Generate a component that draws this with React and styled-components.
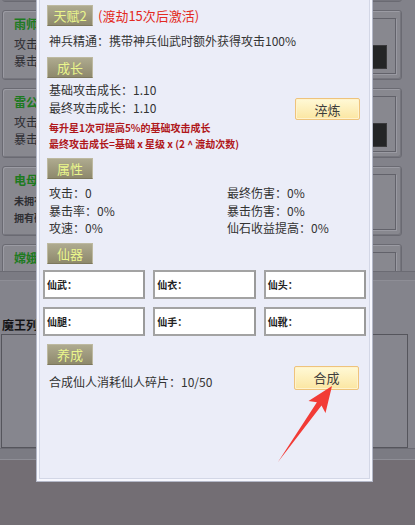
import React from "react";
import styled, { createGlobalStyle } from "styled-components";

const Global = createGlobalStyle`
  html, body { margin: 0; padding: 0; }
  body { width: 415px; height: 525px; overflow: hidden; background: #736e74; }
  * { box-sizing: border-box; }
`;

const FONT = `"Noto Sans CJK SC", "Noto Sans", sans-serif`;

const Scene = styled.div`
  position: relative;
  width: 415px;
  height: 525px;
  overflow: hidden;
  font-family: ${FONT};
  background: #736e74;
`;

const Backdrop = styled.div`
  display: flex;
  flex-direction: column;
  height: 100%;
`;

const ListArea = styled.div`
  height: 271px;
  flex: none;
  display: flex;
  align-items: flex-start;
  overflow: hidden;
  background: #82828a;
`;

const LeftClip = styled.div`
  width: 37px;
  overflow: hidden;
  flex: none;
`;

const LeftList = styled.div`
  width: 200px;
  margin-top: -68px;
  display: flex;
  flex-direction: column;
  gap: 8px;
`;

const RightList = styled.div`
  width: 102px;
  margin-left: auto;
  margin-right: 13px;
  margin-top: -68px;
  display: flex;
  flex-direction: column;
  gap: 8px;
`;

const Card = styled.div`
  height: 70px;
  flex: none;
  margin-left: ${(p) => (p.$right ? "0" : "2px")};
  border: 1px solid #6a6a72;
  border-radius: 3px;
  background: #88888f;
  box-shadow: inset 1px 1px 0 #9b9ba3, inset -1px -1px 0 #75757d;
  padding: ${(p) => (p.$right ? "7px 5px 5px 9px" : "4px 0 0 11px")};
  display: flex;
  flex-direction: column;
`;

const HeroName = styled.div`
  color: #1d7a1f;
  font-weight: bold;
  font-size: 12px;
  line-height: 18px;
  margin-bottom: 2px;
`;

const HeroLine = styled.div`
  color: #2e2e33;
  font-size: ${(p) => (p.$small ? "10px" : "12px")};
  line-height: ${(p) => (p.$small ? "15px" : "17px")};
  font-weight: ${(p) => (p.$small ? "bold" : "normal")};
  white-space: nowrap;
  margin-top: ${(p) => (p.$small ? "2px" : "0")};
`;

const InnerBox = styled.div`
  flex: 1;
  border: 1px solid #62626a;
  box-shadow: 1px 1px 0 #9a9aa2;
  display: flex;
  justify-content: flex-end;
  align-items: flex-start;
  padding: 26px 8px 0 0;
`;

const DarkSquare = styled.div`
  width: 28px;
  height: 24px;
  background: #242526;
  border: 1px solid #3a3a3c;
  border-left: ${(p) => (p.$teal ? "2px solid #1f8fa0" : "1px solid #3a3a3c")};
`;

const Divider = styled.div`
  height: ${(p) => p.$h}px;
  flex: none;
  background: #7b7b83;
  border-top: 1px solid #6b6b73;
  border-bottom: 1px solid #8e8e96;
`;

const BossArea = styled.div`
  height: 167px;
  flex: none;
  background: #84848c;
  display: flex;
  flex-direction: column;
`;

const BossTitle = styled.div`
  height: 53px;
  width: 37px;
  overflow: hidden;
  white-space: nowrap;
  display: flex;
  align-items: flex-end;
  padding-left: 2px;
  font-size: 12px;
  font-weight: bold;
  color: #141416;
  line-height: 18px;
`;

const BossBox = styled.div`
  flex: 1;
  margin: 0 7px 0 1px;
  border: 1px solid #55555c;
  background: #86868e;
`;

const Dark = styled.div`
  flex: 1;
  background: #736e74;
`;

const Panel = styled.div`
  position: absolute;
  left: 36px;
  top: -12px;
  width: 337px;
  height: 494px;
  background: #ebedf8;
  border: 1px solid #b4b8c8;
  box-shadow: inset 0 0 0 2px #f7f8ff, inset 0 0 0 3px #d3d7e6;
  padding: 16px 12px 0 12px;
  display: flex;
  flex-direction: column;
  color: #333;
  font-size: 12px;
`;

const HeadRow = styled.div`
  display: flex;
  align-items: center;
  gap: 5px;
  margin-top: ${(p) => p.$mt || 0}px;
`;

const Tag = styled.div`
  width: 46px;
  height: 21px;
  margin-left: -2px;
  flex: none;
  display: flex;
  align-items: center;
  justify-content: center;
  background: linear-gradient(#aeaa8f, #8e896c);
  border: 1px solid #bdb9a0;
  border-bottom-color: #7c775d;
  color: #eaf68c;
  font-size: 13px;
  line-height: 1;
`;

const Note = styled.span`
  color: #e32a22;
  font-size: 13px;
`;

const Line = styled.div`
  line-height: 18px;
  white-space: nowrap;
  margin-top: ${(p) => p.$mt || 0}px;
`;

const GrowthRow = styled.div`
  display: flex;
  justify-content: space-between;
  align-items: flex-start;
  margin-top: 3px;
`;

const Lines = styled.div`
  display: flex;
  flex-direction: column;
`;

const GoldButton = styled.button`
  width: 65px;
  height: ${(p) => p.$h}px;
  margin-top: ${(p) => p.$mt || 0}px;
  margin-right: ${(p) => p.$mr || 0}px;
  padding: 0;
  border: 1px solid #eec37c;
  border-radius: 2px;
  background: linear-gradient(#fff9d6, #fbe6a2);
  box-shadow: inset 0 0 0 1px #fff3cc;
  color: #3d3d3d;
  font-family: ${FONT};
  font-size: 13px;
  cursor: pointer;
`;

const RedNote = styled.div`
  color: #b0171b;
  font-size: 10px;
  font-weight: bold;
  line-height: 16px;
  white-space: nowrap;
`;

const StatsGrid = styled.div`
  display: grid;
  grid-template-columns: 178px 1fr;
  grid-auto-rows: 17.5px;
  margin-top: 5px;
  line-height: 17.5px;
`;

const FieldGrid = styled.div`
  display: grid;
  grid-template-columns: repeat(3, 1fr);
  grid-auto-rows: 29px;
  gap: 8px;
  margin: 6px -6px 0 -6px;
`;

const Field = styled.div`
  background: #fff;
  border: 2px solid #a3a3a3;
  border-right-color: #9a9a9a;
  display: flex;
  align-items: center;
  padding-left: 2px;
  font-size: 10px;
  font-weight: bold;
  color: #222;
`;

const SynthRow = styled.div`
  display: flex;
  justify-content: space-between;
  align-items: flex-start;
  margin-top: 1px;
`;

const SynthText = styled.div`
  padding-top: 7px;
  line-height: 18px;
`;

const ArrowSvg = styled.svg`
  position: absolute;
  left: 0;
  top: 0;
  width: 415px;
  height: 525px;
  pointer-events: none;
`;

const leftHeroes = [
  { name: "", lines: ["", ""] },
  { name: "雨师", lines: ["攻击", "暴击"] },
  { name: "雷公", lines: ["攻击", "暴击"] },
  { name: "电母", lines: ["未拥有", "拥有碎"], small: true },
  { name: "嫦娥", lines: ["攻击", "暴击"] },
];

const fields = ["仙武：", "仙衣：", "仙头：", "仙腿：", "仙手：", "仙靴："];

export default function App() {
  return (
    <>
      <Global />
      <Scene>
        <Backdrop>
          <ListArea>
            <LeftClip>
              <LeftList>
                {leftHeroes.map((h, i) => (
                  <Card key={i}>
                    <HeroName>{h.name}</HeroName>
                    {h.lines.map((l, j) => (
                      <HeroLine key={j} $small={h.small}>
                        {l}
                      </HeroLine>
                    ))}
                  </Card>
                ))}
              </LeftList>
            </LeftClip>
            <RightList>
              {[0, 1, 2, 3, 4].map((i) => (
                <Card key={i} $right>
                  <InnerBox>
                    {(i === 1 || i === 2) && <DarkSquare $teal={i === 1} />}
                  </InnerBox>
                </Card>
              ))}
            </RightList>
          </ListArea>
          <Divider $h={10} />
          <BossArea>
            <BossTitle>魔王列表</BossTitle>
            <BossBox />
          </BossArea>
          <Divider $h={12} />
          <Dark />
        </Backdrop>

        <Panel>
          <HeadRow>
            <Tag>天赋2</Tag>
            <Note>(渡劫15次后激活)</Note>
          </HeadRow>
          <Line $mt={6}>神兵精通：携带神兵仙武时额外获得攻击100%</Line>

          <HeadRow $mt={7}>
            <Tag>成长</Tag>
          </HeadRow>
          <GrowthRow>
            <Lines>
              <Line>基础攻击成长：1.10</Line>
              <Line>最终攻击成长：1.10</Line>
            </Lines>
            <GoldButton $h={22} $mt={17}>淬炼</GoldButton>
          </GrowthRow>
          <RedNote>每升星1次可提高5%的基础攻击成长</RedNote>
          <RedNote>最终攻击成长=基础 x 星级 x (2 ^ 渡劫次数)</RedNote>

          <HeadRow $mt={6}>
            <Tag>属性</Tag>
          </HeadRow>
          <StatsGrid>
            <div>攻击：0</div>
            <div>最终伤害：0%</div>
            <div>暴击率：0%</div>
            <div>暴击伤害：0%</div>
            <div>攻速：0%</div>
            <div>仙石收益提高：0%</div>
          </StatsGrid>

          <HeadRow $mt={6}>
            <Tag>仙器</Tag>
          </HeadRow>
          <FieldGrid>
            {fields.map((f) => (
              <Field key={f}>{f}</Field>
            ))}
          </FieldGrid>

          <HeadRow $mt={8}>
            <Tag>养成</Tag>
          </HeadRow>
          <SynthRow>
            <SynthText>合成仙人消耗仙人碎片：10/50</SynthText>
            <GoldButton $h={24} $mr={1}>合成</GoldButton>
          </SynthRow>
        </Panel>

        <ArrowSvg viewBox="0 0 415 525">
          <polygon
            points="332,386 325.5,413 321.5,405.4 278,462 316.9,402.2 308.5,401"
            fill="#f23b36"
          />
        </ArrowSvg>
      </Scene>
    </>
  );
}
